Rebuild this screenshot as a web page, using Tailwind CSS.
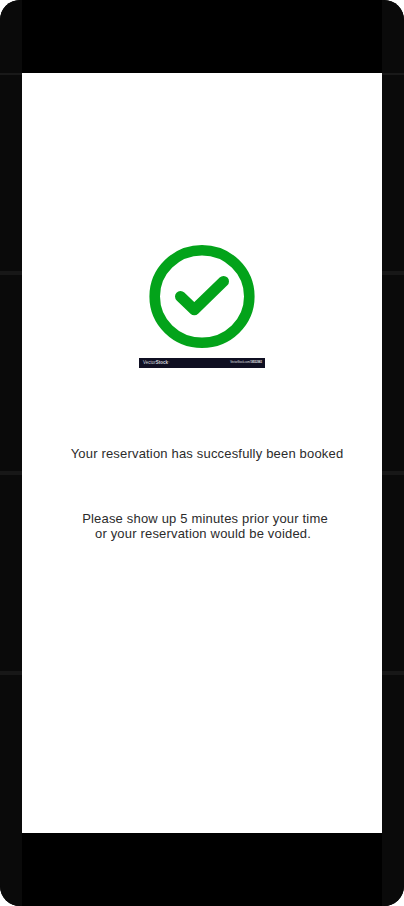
<!DOCTYPE html>
<html lang="en">
<head>
<meta charset="utf-8">
<meta name="viewport" content="width=device-width, initial-scale=1">
<title>Reservation booked</title>
<script src="https://cdn.jsdelivr.net/npm/@tailwindcss/browser@4"></script>
</head>
<body class="bg-white font-['Liberation_Sans',Arial,sans-serif]">
<div class="flex h-[906px] w-[404px] overflow-hidden rounded-[20px] bg-black">
  <div class="flex w-[22px] flex-col bg-[#0a0a0a]">
    <div class="mt-[73px] h-[2px] bg-[#191919]"></div>
    <div class="mt-[196px] h-[4px] bg-[#171717]"></div>
    <div class="mt-[196px] h-[4px] bg-[#171717]"></div>
    <div class="mt-[196px] h-[4px] bg-[#171717]"></div>
  </div>
  <main class="mt-[73px] flex h-[760px] w-[360px] flex-col items-center bg-white pt-[172px] text-[13px] leading-[15px] tracking-[0.18px] text-[#2b2b2b]">
    <svg class="h-[103px] w-[106px]" viewBox="149 245 106 103" fill="none" stroke="#03a31a">
      <ellipse cx="202" cy="296.5" rx="47.3" ry="46.2" stroke-width="10.6"/>
      <path d="M180.5 296.5 194.3 309.7 223.5 281.4" stroke-width="11" stroke-linecap="round" stroke-linejoin="round"/>
    </svg>
    <div class="mt-[10px] flex h-[10px] w-[126px] items-center justify-between bg-[#0f0f22] pr-[3px] pl-[4px] leading-none tracking-normal whitespace-nowrap text-white">
      <span class="text-[4.5px] text-gray-300">Vector<b>Stock</b><sup class="text-[2px]">®</sup></span>
      <span class="text-[2.6px] text-gray-200">VectorStock.com/<b>18552982</b></span>
    </div>
    <p class="mt-[78px] ml-[10px] whitespace-nowrap">Your reservation has succesfully been booked</p>
    <p class="mt-[50px] ml-[6px] text-center whitespace-nowrap">Please show up 5 minutes prior your time<br><span class="pr-[4px]">or your reservation would be voided.</span></p>
  </main>
  <div class="flex w-[22px] flex-col bg-[#0a0a0a]">
    <div class="mt-[73px] h-[2px] bg-[#191919]"></div>
    <div class="mt-[196px] h-[4px] bg-[#171717]"></div>
    <div class="mt-[196px] h-[4px] bg-[#171717]"></div>
    <div class="mt-[196px] h-[4px] bg-[#171717]"></div>
  </div>
</div>
</body>
</html>
